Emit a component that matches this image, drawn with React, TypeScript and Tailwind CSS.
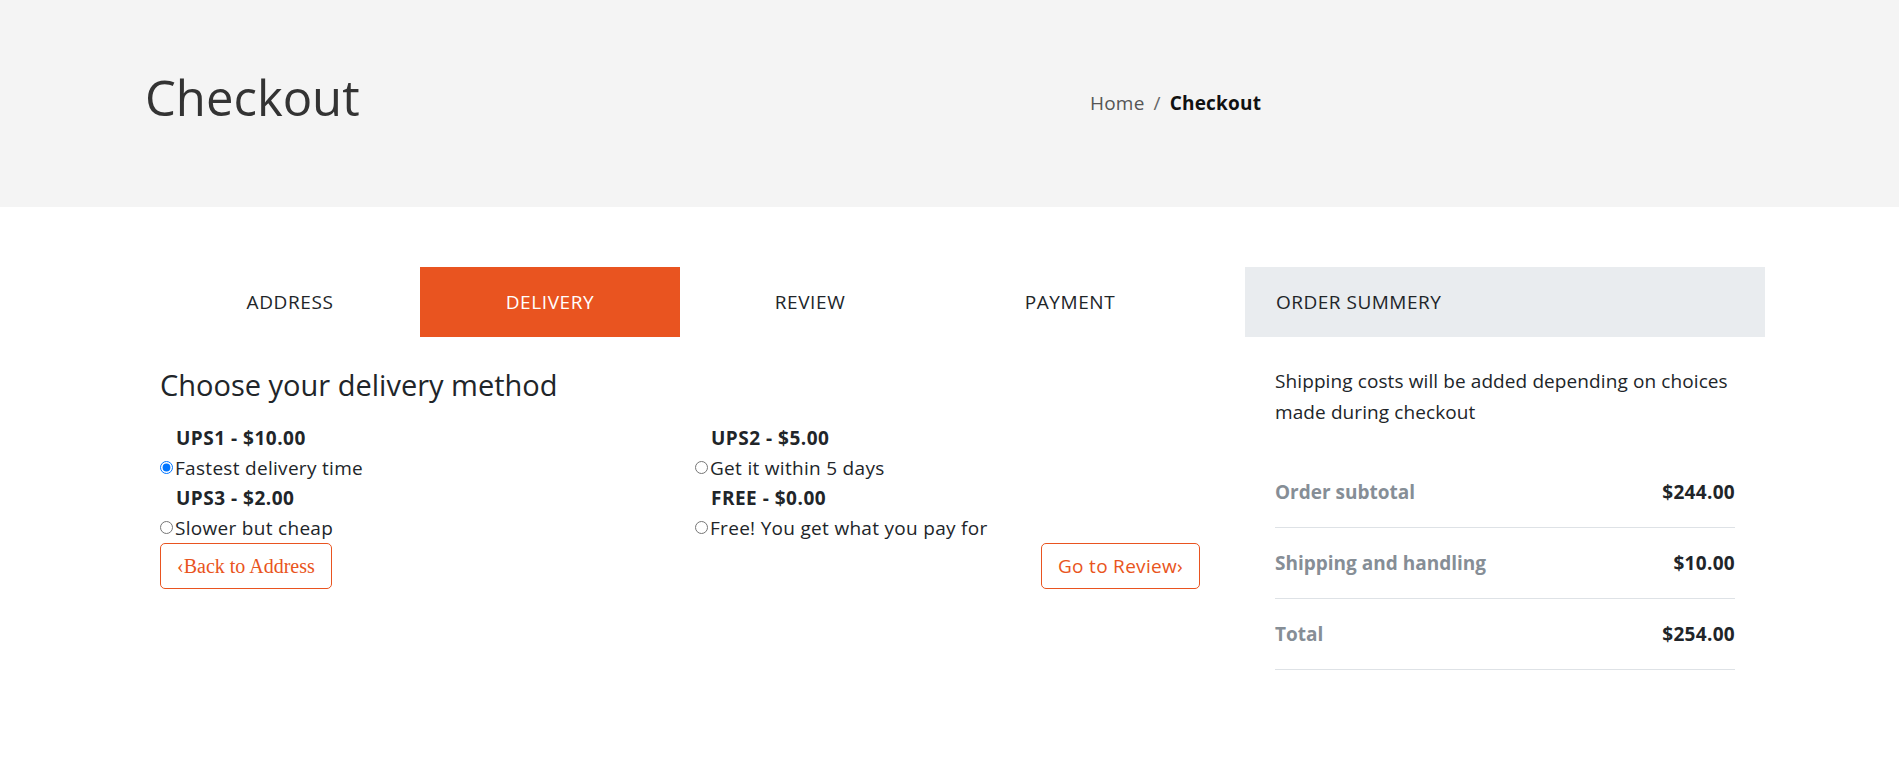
import React from "react";

interface Method {
  label: string;
  note: string;
  checked?: boolean;
}

const tabs = ["Address", "Delivery", "Review", "Payment"];

const methods: Method[] = [
  { label: "UPS1 - $10.00", note: "Fastest delivery time", checked: true },
  { label: "UPS2 - $5.00", note: "Get it within 5 days" },
  { label: "UPS3 - $2.00", note: "Slower but cheap" },
  { label: "FREE - $0.00", note: "Free! You get what you pay for" },
];

const totals = [
  { label: "Order subtotal", value: "$244.00" },
  { label: "Shipping and handling", value: "$10.00" },
  { label: "Total", value: "$254.00" },
];

function MethodOption({ m }: { m: Method }) {
  return (
    <div>
      <div className="pl-[16px] h-[30px] leading-[30px] font-bold tracking-[0.5px]">{m.label}</div>
      <label className="flex items-center h-[30px] leading-[30px] tracking-[0.3px]">
        <input
          type="radio"
          name="delivery"
          defaultChecked={m.checked}
          className="m-0 mr-[2px] w-[13px] h-[13px] shrink-0"
        />
        <span>{m.note}</span>
      </label>
    </div>
  );
}

export default function App() {
  return (
    <div className="min-h-screen bg-white font-['Open_Sans',sans-serif] text-[#212529]">
      <header className="bg-[#f4f4f4] h-[207px] flex items-center pl-[145px]">
        <h1 className="w-[945px] text-[49px] leading-none font-normal text-[#333] mb-[12px]">Checkout</h1>
        <nav className="flex items-center gap-[9px] text-[19px] tracking-[0.2px]">
          <span className="text-[#555]">Home</span>
          <span className="text-[#666]">/</span>
          <span className="font-bold text-[#111]">Checkout</span>
        </nav>
      </header>

      <main className="flex pl-[160px] pt-[60px] gap-[45px]">
        <section className="w-[1040px]">
          <div className="grid grid-cols-4 h-[70px]">
            {tabs.map((t) => (
              <div
                key={t}
                className={
                  t === "Delivery"
                    ? "flex items-center justify-center uppercase text-[19px] tracking-[0.6px] bg-[#e95420] text-white"
                    : "flex items-center justify-center uppercase text-[19px] tracking-[0.6px] text-[#212529]"
                }
              >
                {t}
              </div>
            ))}
          </div>

          <h2 className="mt-[31px] text-[29px] leading-[1.2] font-normal">Choose your delivery method</h2>

          <div className="grid grid-cols-2 gap-x-[30px] mt-[20px] text-[19px]">
            <div>
              <MethodOption m={methods[0]} />
              <MethodOption m={methods[2]} />
            </div>
            <div>
              <MethodOption m={methods[1]} />
              <MethodOption m={methods[3]} />
            </div>
          </div>

          <div className="flex justify-between">
            <button className="h-[46px] px-[16px] border border-[#e95420] rounded-[5px] text-[#e95420] text-[20px] font-['Liberation_Serif',serif]">
              ‹Back to Address
            </button>
            <button className="h-[46px] px-[16px] border border-[#e95420] rounded-[5px] text-[#e95420] text-[19px] tracking-[0.3px]">
              Go to Review›
            </button>
          </div>
        </section>

        <aside className="w-[520px]">
          <div className="h-[70px] bg-[#e9ecef] px-[31px] flex items-center uppercase text-[19px] tracking-[0.5px]">
            Order Summery
          </div>
          <div className="px-[30px]">
            <p className="pt-[29px] leading-[31px] text-[19px] tracking-[0.1px]">
              Shipping costs will be added depending on choices made during checkout
            </p>
            <div className="mt-[29px]">
              {totals.map((r) => (
                <div
                  key={r.label}
                  className="h-[71px] flex items-center justify-between border-b border-[#dee2e6] text-[19px] font-bold"
                >
                  <span className="text-[#868e96]">{r.label}</span>
                  <span className="text-[#212529] tracking-[0.3px]">{r.value}</span>
                </div>
              ))}
            </div>
          </div>
        </aside>
      </main>
    </div>
  );
}
